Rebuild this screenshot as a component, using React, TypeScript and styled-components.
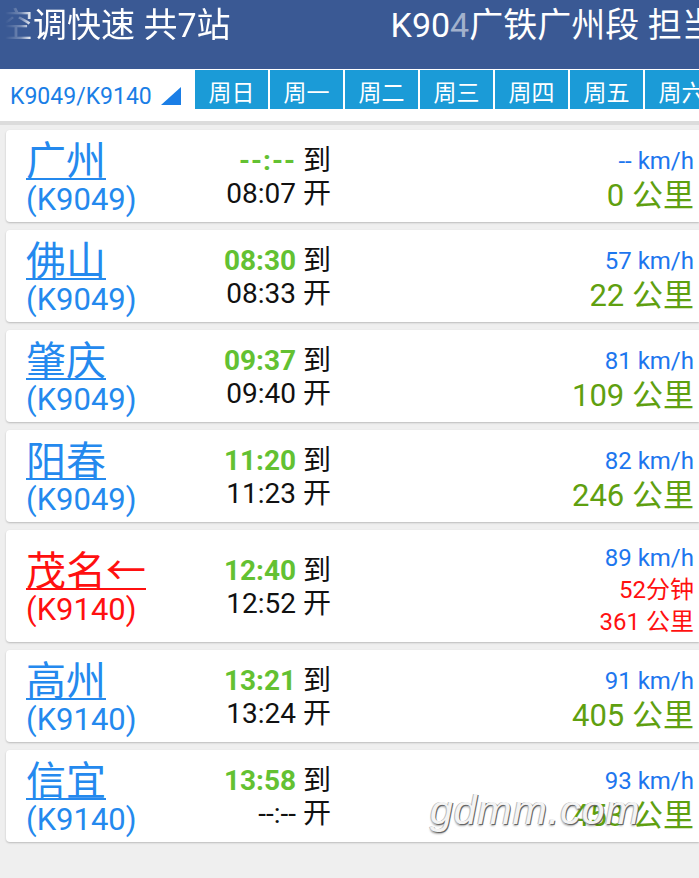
import React from "react";
import styled, { createGlobalStyle } from "styled-components";

const Global = createGlobalStyle`
  html, body { margin: 0; padding: 0; background: #efefef; }
  body { font-family: Roboto, "Noto Sans CJK SC", sans-serif; overflow: hidden; }
`;

const Page = styled.div`
  position: relative;
  width: 699px;
  height: 878px;
  overflow: hidden;
  background: #efefef;
`;

const Header = styled.header`
  height: 69px;
  background: #3a5994;
  color: #fff;
  display: flex;
  align-items: flex-start;
  gap: 160px;
  font-size: 34px;
  line-height: 50px;
  white-space: nowrap;
  overflow: hidden;
`;

const Marquee = styled.span`
  flex: none;
  margin-left: -1px;
  -webkit-mask-image: linear-gradient(to right, transparent 6px, rgba(0,0,0,0.3) 22px, #000 33px);
  mask-image: linear-gradient(to right, transparent 6px, rgba(0,0,0,0.3) 22px, #000 33px);
`;

const Lead = styled.span`
  flex: none;
`;

const Faded = styled.span`
  color: rgba(255, 255, 255, 0.55);
`;

const SubBar = styled.div`
  height: 52px;
  background: #fff;
  display: flex;
  align-items: flex-start;
  border-bottom: 4px solid #dcdcdc;
  overflow: hidden;
`;

const TrainSelect = styled.div`
  flex: none;
  width: 195px;
  height: 52px;
  display: flex;
  align-items: center;
  padding-left: 10px;
  padding-top: 2px;
  box-sizing: border-box;
  color: #1a7ee6;
  font-size: 23px;
  gap: 9px;
`;

const Tabs = styled.div`
  flex: none;
  display: flex;
  gap: 2px;
  padding-top: 1px;
`;

const Tab = styled.div`
  width: 73px;
  height: 39px;
  flex: none;
  background: #1b9bd7;
  color: #fff;
  font-size: 23px;
  display: flex;
  align-items: center;
  justify-content: center;
  padding-top: 3px;
  box-sizing: border-box;
`;

const List = styled.div`
  display: flex;
  flex-direction: column;
  gap: 8px;
  padding: 5px 0 0 6px;
`;

const Card = styled.div`
  background: #fff;
  border-radius: 4px 0 0 4px;
  box-shadow: 0 1px 2px rgba(0, 0, 0, 0.22);
  display: grid;
  grid-template-columns: 190px 115px 1fr;
  align-items: center;
  padding: 12px 5px 4px 20px;
`;

const StationCol = styled.div<{ $red?: boolean }>`
  display: flex;
  flex-direction: column;
  color: ${(p) => (p.$red ? "#ff1010" : "#2489ee")};
`;

const StationName = styled.span`
  font-size: 40px;
  line-height: 40px;
  text-decoration: underline;
  text-decoration-thickness: 2px;
  text-underline-offset: 3px;
  white-space: nowrap;
`;

const TrainNo = styled.span`
  font-size: 31px;
  line-height: 36px;
`;

const TimeCol = styled.div`
  display: flex;
  flex-direction: column;
  align-items: flex-end;
  padding-bottom: 6px;
  font-size: 28px;
  line-height: 33px;
  color: #111;
  white-space: nowrap;
`;

const Arrive = styled.span<{ $none?: boolean }>`
  color: #63c132;
  font-weight: 700;
  letter-spacing: ${(p) => (p.$none ? "1px" : "0")};
`;

const InfoCol = styled.div`
  display: flex;
  flex-direction: column;
  align-items: flex-end;
  white-space: nowrap;
`;

const Speed = styled.span`
  color: #1d76ee;
  font-size: 24px;
  line-height: 32px;
`;

const Distance = styled.span<{ $red?: boolean }>`
  color: ${(p) => (p.$red ? "#ff1010" : "#5fa010")};
  font-size: ${(p) => (p.$red ? "24px" : "31px")};
  line-height: ${(p) => (p.$red ? "32px" : "38px")};
`;

const Stay = styled.span`
  color: #ff1010;
  font-size: 24px;
  line-height: 32px;
`;

const Watermark = styled.div`
  position: absolute;
  left: 430px;
  top: 786px;
  font-family: "Liberation Sans", sans-serif;
  font-style: italic;
  font-size: 41px;
  line-height: 48px;
  letter-spacing: 1px;
  color: #f4f4f4;
  text-shadow: 1px 1px 0 #666, -1px 0 0 #bbb, 0 2px 2px rgba(0,0,0,0.35);
  pointer-events: none;
`;

type Stop = {
  name: string;
  train: string;
  arrive: string;
  depart: string;
  speed: string;
  km: string;
  stay?: string;
  red?: boolean;
};

const stops: Stop[] = [
  { name: "广州", train: "K9049", arrive: "--:--", depart: "08:07", speed: "--", km: "0" },
  { name: "佛山", train: "K9049", arrive: "08:30", depart: "08:33", speed: "57", km: "22" },
  { name: "肇庆", train: "K9049", arrive: "09:37", depart: "09:40", speed: "81", km: "109" },
  { name: "阳春", train: "K9049", arrive: "11:20", depart: "11:23", speed: "82", km: "246" },
  { name: "茂名←", train: "K9140", arrive: "12:40", depart: "12:52", speed: "89", km: "361", stay: "52分钟", red: true },
  { name: "高州", train: "K9140", arrive: "13:21", depart: "13:24", speed: "91", km: "405" },
  { name: "信宜", train: "K9140", arrive: "13:58", depart: "--:--", speed: "93", km: "453" },
];

const days = ["周日", "周一", "周二", "周三", "周四", "周五", "周六"];

export default function App() {
  return (
    <Page>
      <Global />
      <Header>
        <Marquee>空调快速 共7站</Marquee>
        <Lead>
          K90<Faded>4</Faded>广铁广州段 担当
        </Lead>
      </Header>
      <SubBar>
        <TrainSelect>
          <span>K9049/K9140</span>
          <svg width="20" height="18" viewBox="0 0 20 18">
            <polygon points="20,0 20,18 0,18" fill="#1a7ee6" />
          </svg>
        </TrainSelect>
        <Tabs>
          {days.map((d) => (
            <Tab key={d}>{d}</Tab>
          ))}
        </Tabs>
      </SubBar>
      <List>
        {stops.map((s) => (
          <Card key={s.name}>
            <StationCol $red={s.red}>
              <StationName>{s.name}</StationName>
              <TrainNo>({s.train})</TrainNo>
            </StationCol>
            <TimeCol>
              <span>
                <Arrive $none={s.arrive === "--:--"}>{s.arrive}</Arrive> 到
              </span>
              <span>{s.depart} 开</span>
            </TimeCol>
            <InfoCol>
              <Speed>{s.speed} km/h</Speed>
              {s.stay && <Stay>{s.stay}</Stay>}
              <Distance $red={s.red}>{s.km} 公里</Distance>
            </InfoCol>
          </Card>
        ))}
      </List>
      <Watermark>gdmm.com</Watermark>
    </Page>
  );
}
